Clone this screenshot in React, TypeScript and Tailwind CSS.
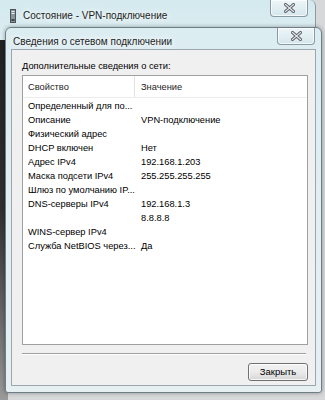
const rows = [
  { name: "Определенный для по...", value: "" },
  { name: "Описание", value: "VPN-подключение" },
  { name: "Физический адрес", value: "" },
  { name: "DHCP включен", value: "Нет" },
  { name: "Адрес IPv4", value: "192.168.1.203" },
  { name: "Маска подсети IPv4", value: "255.255.255.255" },
  { name: "Шлюз по умолчанию IP...", value: "" },
  { name: "DNS-серверы IPv4", value: "192.168.1.3" },
  { name: "", value: "8.8.8.8" },
  { name: "WINS-сервер IPv4", value: "" },
  { name: "Служба NetBIOS через...", value: "Да" },
];

const CloseButton = () => (
  <div className="w-[38px] h-[17px] rounded-b-[4px] border border-t-0 border-[#8a9aa4] bg-gradient-to-b from-[#eef6f8] to-[#d5e6ec] flex items-center justify-center shadow-[inset_0_0_0_1px_rgba(255,255,255,0.7)]">
    <svg width="11" height="10" viewBox="0 0 11 10">
      <path
        d="M1.5 1.5 L9.5 8.5 M9.5 1.5 L1.5 8.5"
        stroke="#5c6066"
        strokeWidth="3"
        strokeLinecap="square"
      />
      <path
        d="M1.5 1.5 L9.5 8.5 M9.5 1.5 L1.5 8.5"
        stroke="#e4e8ec"
        strokeWidth="1.2"
        strokeLinecap="square"
      />
    </svg>
  </div>
);

export default function App() {
  return (
    <div className="relative w-[325px] h-[400px] overflow-hidden bg-[#d6d8d9] font-['Liberation_Sans',sans-serif] text-[9.3px] text-black">
      {/* dark desktop strip behind the left edge */}
      <div className="absolute left-0 top-[24px] w-[8px] h-[376px] bg-gradient-to-b from-[#202020] via-[#303030] to-[#9a9a9a]" />

      {/* back window: Состояние */}
      <div className="absolute left-0 top-0 w-[316px] h-[40px] rounded-tr-[6px] border-r border-[#8c9ba4] bg-gradient-to-b from-[#d4eaef] to-[#dcedf1]">
        <div className="flex h-[26px] items-start justify-between pr-[7px]">
          <div className="flex items-center gap-[7px] pl-[10px] pt-[8px]">
            <svg width="6" height="14" viewBox="0 0 6 14">
              <rect x="0.5" y="0.5" width="5" height="13" fill="#8a959c" stroke="#4a5358" />
              <rect x="1.5" y="2" width="3" height="1" fill="#e8eef0" />
              <rect x="1.5" y="4" width="3" height="1" fill="#e8eef0" />
              <rect x="1.5" y="10" width="3" height="2" fill="#3e4549" />
            </svg>
            <span className="text-[10px] text-[#1e1e1e] [text-shadow:0_0_6px_#ffffff,0_0_10px_#ffffff]">
              Состояние - VPN-подключение
            </span>
          </div>
          <CloseButton />
        </div>
      </div>

      {/* front window: Сведения о сетевом подключении */}
      <div className="absolute left-[5px] top-[27px] w-[317px] h-[366px] flex flex-col rounded-t-[6px] rounded-b-[3px] border border-[#6f7d86] bg-gradient-to-b from-[#dcedf2] to-[#e6f0f3] px-[5px] pb-[6px] shadow-[0_0_4px_rgba(0,0,0,0.35)]">
        <div className="flex h-[21px] shrink-0 items-start justify-between pr-[1px]">
          <span className="pl-[2px] pt-[6px] text-[10px] text-[#1e1e1e] [text-shadow:0_0_6px_#ffffff,0_0_10px_#ffffff]">
            Сведения о сетевом подключении
          </span>
          <CloseButton />
        </div>

        <div className="flex flex-1 flex-col border border-[#9aa7ae] bg-[#f0f0f0] pl-[10px] pr-[7px]">
          <div className="pt-[10px] pb-[3px] leading-[12px]">
            Дополнительные сведения о сети:
          </div>

          <div className="h-[270px] border border-[#a0a0a0] bg-white">
            <div className="flex h-[22px] items-center border-b border-[#ececec] leading-[12px] text-[#1e1e1e]">
              <div className="w-[112px] pl-[5px] border-r border-[#e2e2e2] h-full flex items-center">
                Свойство
              </div>
              <div className="pl-[6px]">Значение</div>
            </div>
            <div className="pt-[1px]">
              {rows.map((row, i) => (
                <div key={i} className="flex h-[14px] items-center leading-[14px]">
                  <div className="w-[113px] pl-[5px] whitespace-nowrap">{row.name}</div>
                  <div className="pl-[5px] whitespace-nowrap">{row.value}</div>
                </div>
              ))}
            </div>
          </div>

          <div className="mt-[8px] mr-[2px] h-[2px] border-t border-[#a0a0a0] border-b border-b-white" />

          <div className="flex justify-end pt-[8px]">
            <button className="h-[18px] w-[60px] rounded-[3px] border border-[#707070] bg-gradient-to-b from-[#f2f2f2] via-[#ebebeb] to-[#d6d6d6] text-[9.5px] leading-none text-black shadow-[inset_0_0_0_1px_rgba(255,255,255,0.8)]">
              Закрыть
            </button>
          </div>
        </div>
      </div>
    </div>
  );
}
